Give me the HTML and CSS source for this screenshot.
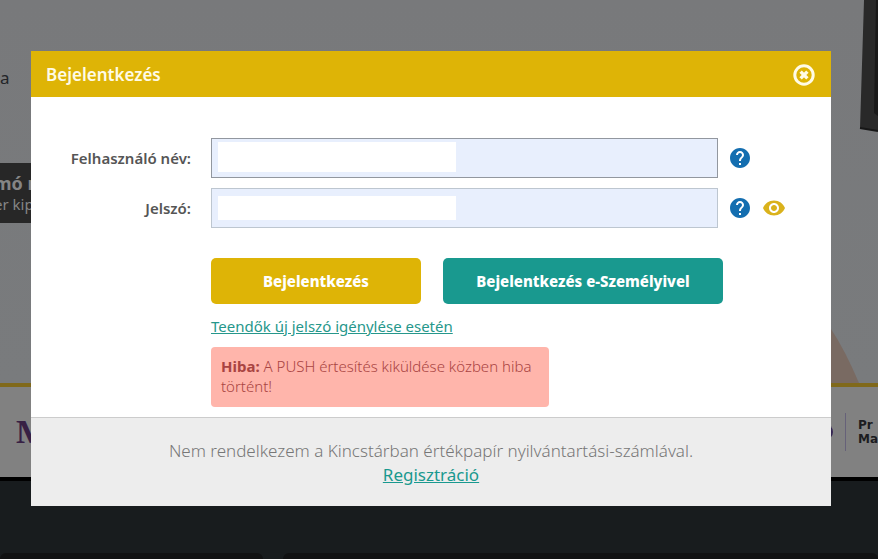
FILE: index.html
```html
<!DOCTYPE html>
<html lang="hu">
<head>
<meta charset="utf-8">
<title>Bejelentkezés</title>
<meta name="viewport" content="width=device-width, initial-scale=1">
<link rel="stylesheet" href="styles.css">
</head>
<body>
<div class="page">
  <section class="hero">
    <p class="hero-text">a</p>
    <div class="caption"><strong>mó n</strong><span>er kip</span></div>
    <svg class="hero-photo" viewBox="0 0 78 383" aria-hidden="true">
      <path d="M64 0H78V131L60 128Z" fill="#292929"/>
      <path d="M76 0H78V116L74 113Z" fill="#191919"/>
      <path d="M60 128L78 131" stroke="#171717" stroke-width="2"/>
      <path d="M0 310L31 329Q45 350 59 383H0Z" fill="#796a62"/>
    </svg>
  </section>
  <section class="partners">
    <span class="partner-serif">M</span>
    <div class="partner-right">
      <i class="dot"></i><i class="rule"></i>
      <span class="partner-name">Pr<br>Ma</span>
    </div>
  </section>
  <footer class="footer"><div class="card"></div><div class="card wide"></div></footer>
</div>

<div class="overlay">
  <main class="modal" role="dialog" aria-labelledby="title">
    <header class="modal-head">
      <h1 id="title">Bejelentkezés</h1>
      <button class="icon-button" type="button" aria-label="Bezárás">
        <svg width="22" height="22" viewBox="0 0 22 22" fill="none" stroke="#fffbe6">
          <circle cx="11" cy="11" r="9.2" stroke-width="3"/>
          <path d="M7.600 7.600l6.800 6.800M14.400 7.600l-6.800 6.800" stroke-width="3.400"/>
        </svg>
      </button>
    </header>
    <form class="form">
      <div class="row">
        <label for="user">Felhasználó név:</label>
        <div class="field"><input class="active" id="user" type="text"><span class="mask"></span></div>
        <button class="icon-button" type="button" aria-label="Súgó">
          <svg width="20" height="20" viewBox="2 2 20 20" fill="#146eb0"><path stroke="#fff" stroke-width="0" d="M12 2C6.480 2 2 6.480 2 12s4.480 10 10 10 10-4.480 10-10S17.520 2 12 2zm1 17h-2v-2h2v2zm2.070-7.750l-.9.920C13.450 12.900 13 13.500 13 15h-2v-.5c0-1.100.45-2.100 1.170-2.830l1.240-1.260c.37-.36.59-.86.59-1.410 0-1.100-.9-2-2-2s-2 .9-2 2H8c0-2.210 1.790-4 4-4s4 1.790 4 4c0 .88-.36 1.680-.93 2.250z"/></svg>
        </button>
      </div>
      <div class="row">
        <label for="pass">Jelszó:</label>
        <div class="field"><input id="pass" type="password"><span class="mask"></span></div>
        <button class="icon-button" type="button" aria-label="Súgó">
          <svg width="20" height="20" viewBox="2 2 20 20" fill="#146eb0"><path d="M12 2C6.480 2 2 6.480 2 12s4.480 10 10 10 10-4.480 10-10S17.520 2 12 2zm1 17h-2v-2h2v2zm2.070-7.750l-.9.920C13.450 12.900 13 13.500 13 15h-2v-.5c0-1.100.45-2.100 1.170-2.830l1.240-1.260c.37-.36.59-.86.59-1.410 0-1.100-.9-2-2-2s-2 .9-2 2H8c0-2.210 1.790-4 4-4s4 1.790 4 4c0 .88-.36 1.680-.93 2.250z"/></svg>
        </button>
        <button class="icon-button" type="button" aria-label="Jelszó megjelenítése">
          <svg width="24" height="24" viewBox="0 0 24 24" fill="#dab21c"><path d="M12 4.500C7 4.500 2.730 7.610 1 12c1.730 4.390 6 7.500 11 7.500s9.270-3.110 11-7.500c-1.730-4.390-6-7.500-11-7.500zM12 17c-2.760 0-5-2.240-5-5s2.240-5 5-5 5 2.240 5 5-2.240 5-5 5zm0-8c-1.660 0-3 1.340-3 3s1.340 3 3 3 3-1.340 3-3-1.340-3-3-3z"/></svg>
        </button>
      </div>
      <div class="actions">
        <div class="buttons">
          <button class="button gold" type="submit">Bejelentkezés</button>
          <button class="button teal" type="button">Bejelentkezés e-Személyivel</button>
        </div>
        <a class="help-link" href="#">Teendők új jelszó igénylése esetén</a>
        <p class="error"><strong>Hiba:</strong> A PUSH értesítés kiküldése közben hiba történt!</p>
      </div>
    </form>
    <div class="register">
      <p>Nem rendelkezem a Kincstárban értékpapír nyilvántartási-számlával.</p>
      <a href="#">Regisztráció</a>
    </div>
  </main>
</div>
</body>
</html>
```
FILE: styles.css
```css
* { box-sizing: border-box; }
body {
  margin: 0;
  background: #181c1e;
  font-family: "Noto Sans", "Open Sans", sans-serif;
  font-size: 15px;
}
h1, p { margin: 0; }

.page { display: flex; flex-direction: column; min-height: 100vh; overflow: hidden; }
.hero {
  position: relative;
  height: 387px;
  padding-top: 66px;
  border-bottom: 4px solid #80691b;
  background: linear-gradient(#78797b, #797b7d);
}
.hero-text { height: 97px; font-size: 17px; line-height: 24px; color: #232529; }
.hero-photo { position: absolute; top: 0; right: 0; width: 78px; height: 383px; }
.caption {
  display: flex;
  flex-direction: column;
  width: 40%;
  height: 60px;
  margin-left: -6px;
  padding-top: 8px;
  background: #272727;
  color: #858585;
  font-size: 15px;
  line-height: 18px;
}
.caption strong { font-size: 18px; line-height: 24px; }
.partners {
  display: flex;
  justify-content: space-between;
  align-items: center;
  height: 94px;
  padding-left: 16px;
  border-bottom: 4px solid #000;
  background: #818181;
}
.partner-serif { font: bold 34px "Liberation Serif", serif; color: #372044; }
.partner-right { display: flex; align-items: center; gap: 12px; }
.dot { width: 16px; height: 16px; border-radius: 50%; background: #352653; }
.rule { width: 1px; height: 38px; background: #666179; }
.partner-name { font: bold 12px/14px "DejaVu Sans", sans-serif; color: #1c1c20; }
.footer { display: flex; gap: 20px; padding-top: 72px; flex: 1; }
.card { width: 30%; min-height: 6px; border-radius: 8px 8px 0 0; background: #111213; }
.card.wide { flex: 1; }

.overlay { position: absolute; top: 0; left: 0; right: 0; padding: 51px 47px 0 31px; }
.modal { background: #fff; }
.modal-head {
  display: flex;
  align-items: center;
  justify-content: space-between;
  height: 46px;
  padding: 2px 16px 0 15px;
  background: #deb406;
}
.modal-head h1 { font-size: 17px; font-weight: 600; line-height: 24px; color: #fffbe6; }
.icon-button {
  display: flex;
  flex: none;
  padding: 0;
  border: 0;
  background: none;
  cursor: pointer;
}
.form { padding: 41px 45px 10px 20px; }
.row { display: flex; align-items: center; gap: 12px; margin-bottom: 10px; }
.row label {
  width: 140px;
  margin-right: 8px;
  font-weight: 600;
  line-height: 20px;
  color: #555;
  text-align: right;
}
.field { position: relative; flex: 1; max-width: 507px; }
.field input {
  display: block;
  width: 100%;
  height: 40px;
  padding: 0 8px;
  border: 1px solid #bdc6d0;
  border-radius: 0;
  background: #e8effd;
  font: inherit;
}
.field .active { border-color: #92979f; }
.mask {
  position: absolute;
  top: 4px;
  bottom: 6px;
  left: 7px;
  width: 238px;
  background: #fff;
  pointer-events: none;
}
.row + .row .mask { top: 8px; bottom: 8px; }
.actions { padding: 20px 0 0 160px; }
.buttons { display: flex; gap: 22px; margin-bottom: 11px; }
.button {
  height: 46px;
  padding: 0;
  border: 0;
  border-radius: 5px;
  font: 800 15px/20px "Noto Sans", sans-serif;
  color: #fff;
}
.gold { width: 210px; background: #deb406; }
.teal { width: 280px; background: #19998f; }
.help-link { display: inline-block; line-height: 22px; color: #26978b; }
.error {
  max-width: 338px;
  margin-top: 10px;
  padding: 9px 10px 11px;
  border-radius: 4px;
  background: #ffb5ab;
  color: #a94442;
  font-weight: 300;
  line-height: 20px;
}
.error strong { font-weight: 700; }
.register {
  padding: 21px 20px 19px;
  border-top: 1px solid #ccc;
  background: #ededed;
  font-size: 17px;
  line-height: 24px;
  text-align: center;
}
.register p { font-weight: 300; color: #777; }
.register a { color: #19998f; }
```
